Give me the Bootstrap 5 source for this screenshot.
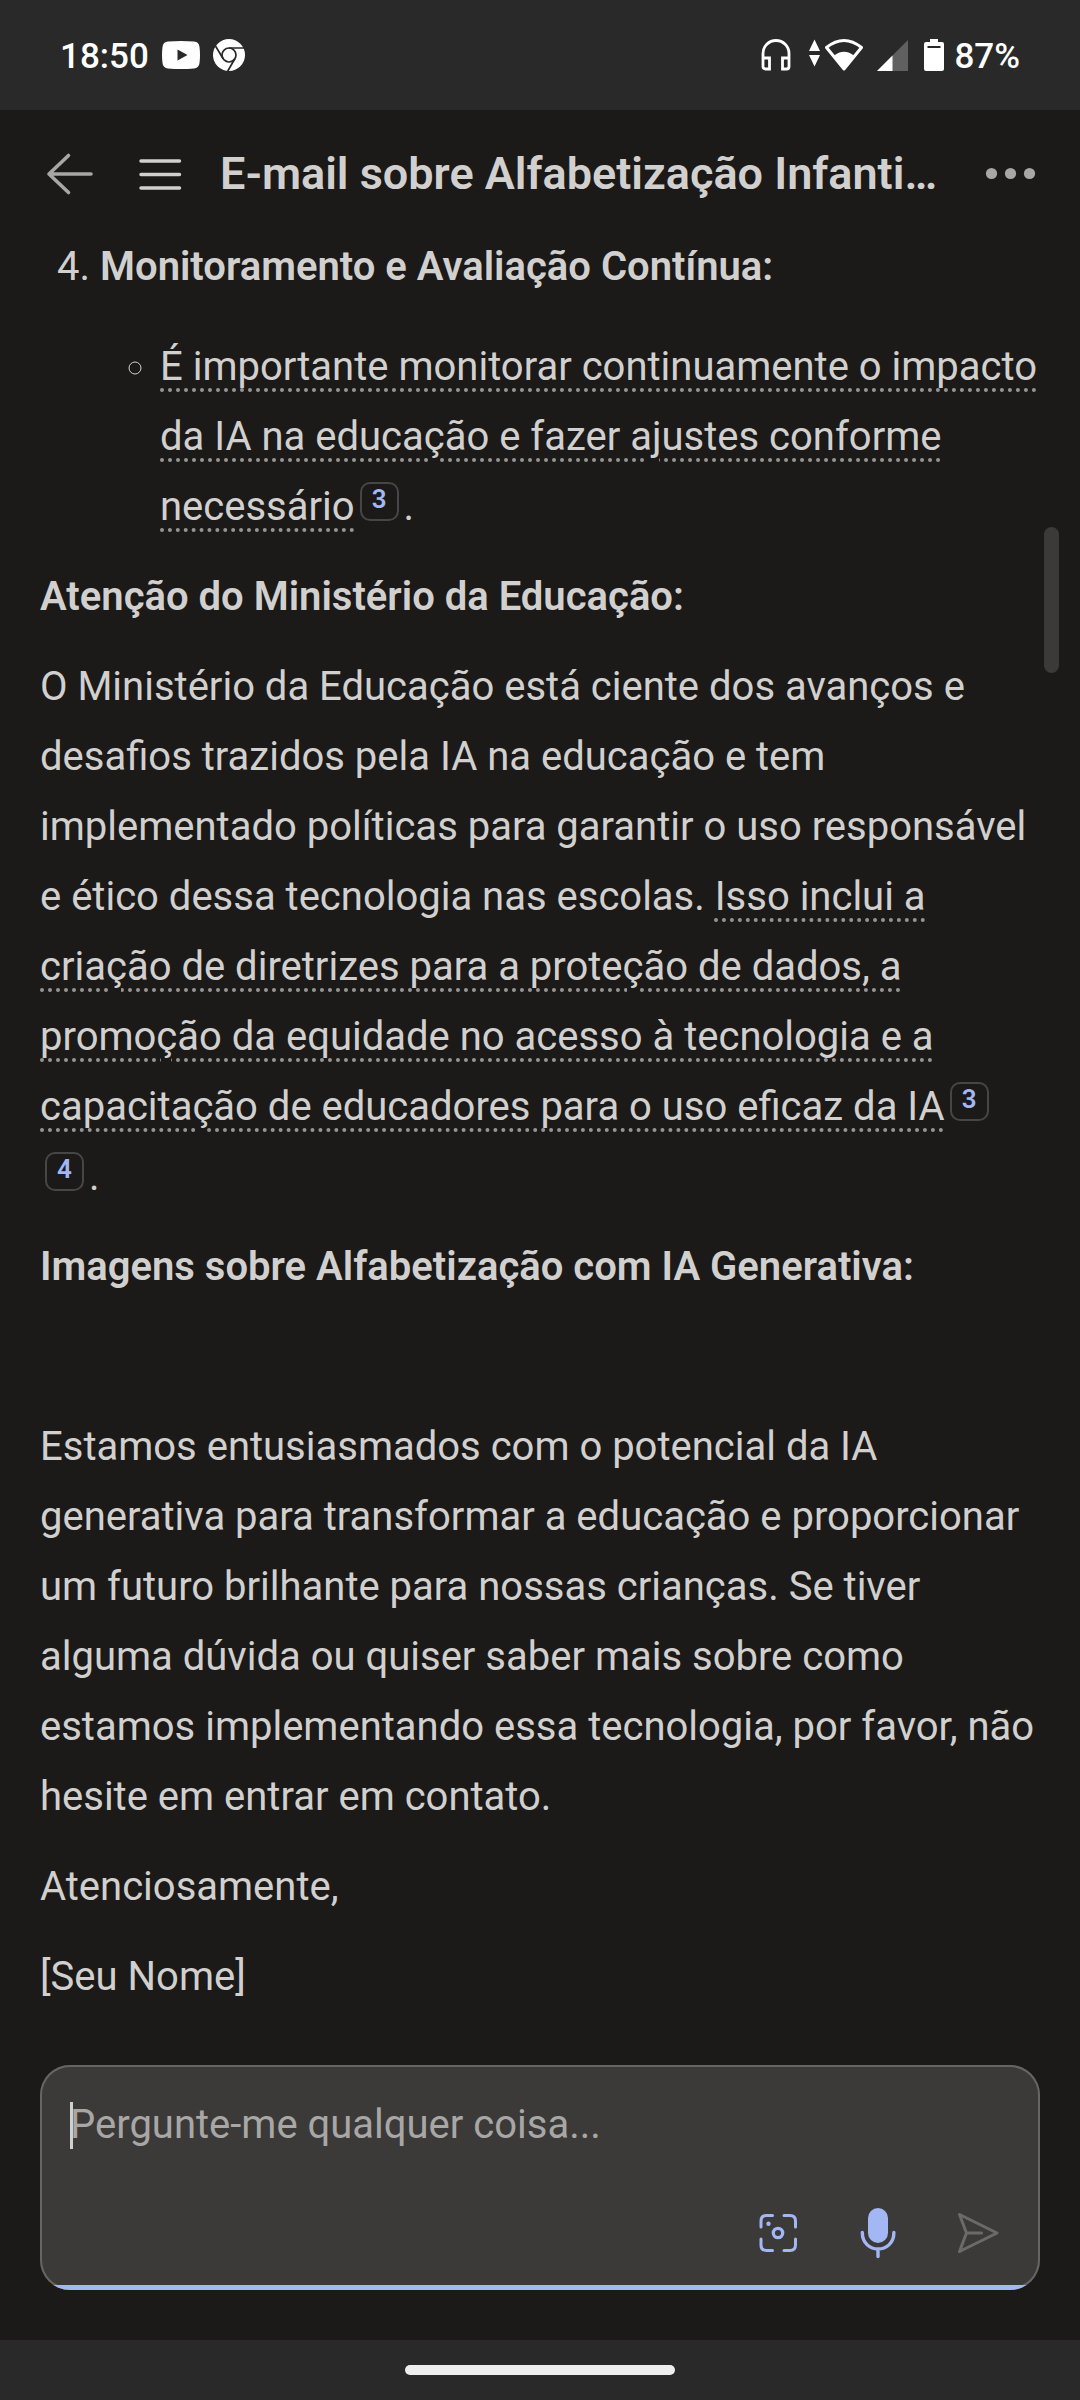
<!DOCTYPE html>
<html lang="pt-BR" data-bs-theme="dark">
<head>
<meta charset="utf-8">
<meta name="viewport" content="width=device-width, initial-scale=1">
<title>E-mail sobre Alfabetização Infantil</title>
<link href="https://cdn.jsdelivr.net/npm/bootstrap@5.3.0/dist/css/bootstrap.min.css" rel="stylesheet">
<style>
  body { width: 1080px; height: 2400px; overflow: hidden; background: #1b1a19; color: #d2d0ce; font-family: Roboto, sans-serif; font-size: 40px; line-height: 70px; }
  svg { display: block; flex: none; }
  .status-bar { height: 110px; background: #292929; color: #fff; font-size: 35px; font-weight: 500; line-height: 40px; padding: 0 60px 0 60px; }
  .status-bar span { padding-top: 3px; }
  .clock { width: 102px; }
  .title-bar { height: 122px; padding: 5px 38px 0 46px; }
  .chat-title { font-size: 45px; font-weight: 600; line-height: 60px; margin-left: 37px; width: 765px; padding-top: 29px; }
  .answer { height: 1833px; padding: 0 40px; }
  .answer p { margin: 0 0 20px; }
  .answer strong { font-weight: 600; }
  .steps { margin: 0 0 20px; padding-left: 60px; }
  .steps ul { margin: 30px 0 0; padding-left: 60px; }
  .cited { text-decoration: underline dotted #979593 4px; text-underline-offset: 8px; }
  .cite-no { display: inline-block; box-sizing: border-box; width: 39px; height: 39px; margin: 0 5px; padding-bottom: 4px; border: 2px solid #484644; border-radius: 10px; color: #a2b7f4; font-size: 26px; font-weight: 600; line-height: 31px; text-align: center; text-decoration: none; vertical-align: 12px; }
  .scroll-thumb { top: 527px; left: 1044px; width: 15px; height: 146px; border-radius: 8px; background: #3b3a38; }
  .ask-box { height: 225px; margin: 0 40px; padding: 30px 37px 30px 30px; background: #3b3a38; box-shadow: inset 0 0 0 2px #666563; border-radius: 30px; overflow: hidden; }
  .accent { left: 0; right: 0; bottom: 0; height: 5px; background: #a2b7f4; }
  .prompt { color: #a8a7a6; line-height: 60px; margin-left: -3px; }
  .caret { width: 3px; height: 47px; background: #d2d0ce; margin-top: 7px; }
  .tools { gap: 50px; }
  .gesture-bar { height: 60px; margin-top: 50px; background: #292929; }
  .gesture-pill { width: 270px; height: 10px; border-radius: 5px; background: #eee; }
</style>
</head>
<body class="position-relative">

<div class="status-bar d-flex align-items-center">
  <span class="clock">18:50</span>
  <svg width="38" height="28" viewBox="0 0 38 28"><path fill="#fff" fill-rule="evenodd" d="M6 .6Q19-.5 32 .6Q37 1 37.500 6Q38.500 14 37.500 22Q37 27 32 27.400Q19 28.500 6 27.400Q1 27 .500 22Q-.500 14 .500 6Q1 1 6 .6ZM15.500 8.500V19.500L25.500 14Z"/></svg>
  <svg class="ms-2 me-auto" width="42" height="34" viewBox="-5 0 42 34"><circle cx="16" cy="17" r="16" fill="#fff"/><g fill="none" stroke="#292929" stroke-width="1.700"><circle cx="16" cy="17" r="7"/><path d="M16 10H31.500M10 20.500L2.500 8M22 20.500L14.500 33.500"/></g></svg>
  <svg width="30" height="34" viewBox="0 0 30 34"><path fill="none" stroke="#fff" stroke-width="2.800" d="M2 21V15.500a13 13 0 0 1 26 0V21M2 20H8.500V31H4.500Q2 31 2 28.500ZM28 20H21.500V31H25.500Q28 31 28 28.500Z"/></svg>
  <svg style="margin-left:17px" width="56" height="34" viewBox="0 0 56 34"><path fill="#fff" d="M1 13L6.500 1.500L12 13ZM1 17H12L6.500 28.500Z"/><path fill="none" stroke="#fff" stroke-width="3" stroke-linejoin="round" d="M18.500 9.500Q36 -4.500 53.500 9.500L36 31Z"/><path fill="#fff" d="M25.500 18Q36 9.500 46.500 18L36 32Z"/></svg>
  <svg style="margin-left:13px" width="31" height="31" viewBox="0 0 31 31"><path fill="#606060" d="M0 31L31 0V31Z"/><path fill="#fff" d="M0 31L15.500 15.500V31Z"/></svg>
  <svg style="margin-left:16px" width="20" height="34" viewBox="0 0 20 34"><path fill="#fff" fill-rule="evenodd" d="M6 1H14V4H18Q20 4 20 6V31Q20 33 18 33H2Q0 33 0 31V6Q0 4 2 4H6ZM3.500 8V10H16.500V8Z"/></svg>
  <span style="margin-left:10px">87%</span>
</div>

<header class="title-bar d-flex">
  <svg class="mt-4" width="48" height="70" viewBox="0 0 48 70"><path transform="translate(0 -.5)" fill="none" stroke="#a8a7a6" stroke-width="3.600" stroke-linecap="round" stroke-linejoin="round" d="M45 35.500H3M22.500 17L3 35.500L22.500 54"/></svg>
  <svg class="mt-4" style="margin-left:45px" width="44" height="70" viewBox="0 0 44 70"><path stroke="#d2d0ce" stroke-width="3.500" stroke-linecap="round" d="M2 22H40.500M2 35.500H40.500M2 49H40.500"/></svg>
  <div class="chat-title text-nowrap">E-mail sobre Alfabetização Infanti…</div>
  <svg class="mt-4" width="60" height="70" viewBox="0 0 60 70"><g fill="#a8a7a6"><circle cx="9.500" cy="34.500" r="5.600"/><circle cx="28.500" cy="34.500" r="5.600"/><circle cx="47.500" cy="34.500" r="5.600"/></g></svg>
</header>

<main class="answer">
  <ol class="steps" start="4">
    <li><strong>Monitoramento e Avaliação Contínua:</strong>
      <ul>
        <li><span class="cited">É importante monitorar continuamente o impacto da IA na educação e fazer ajustes conforme necessário</span><a class="cite-no">3</a>.</li>
      </ul>
    </li>
  </ol>
  <p><strong>Atenção do Ministério da Educação:</strong></p>
  <p>O Ministério da Educação está ciente dos avanços e desafios trazidos pela IA na educação e tem implementado políticas para garantir o uso responsável e ético dessa tecnologia nas escolas. <span class="cited">Isso inclui a criação de diretrizes para a proteção de dados, a promoção da equidade no acesso à tecnologia e a capacitação de educadores para o uso eficaz da IA</span><a class="cite-no">3</a><a class="cite-no">4</a>.</p>
  <p><strong>Imagens sobre Alfabetização com IA Generativa:</strong></p>
  <p>&nbsp;</p>
  <p>Estamos entusiasmados com o potencial da IA generativa para transformar a educação e proporcionar um futuro brilhante para nossas crianças. Se tiver alguma dúvida ou quiser saber mais sobre como estamos implementando essa tecnologia, por favor, não hesite em entrar em contato.</p>
  <p>Atenciosamente,</p>
  <p>[Seu Nome]</p>
</main>

<section class="ask-box position-relative d-flex flex-column justify-content-between">
  <div class="d-flex"><span class="caret"></span><span class="prompt">Pergunte-me qualquer coisa...</span></div>
  <div class="tools d-flex justify-content-end">
    <svg width="50" height="54" viewBox="753 2206 50 54"><g fill="none" stroke="#a2b7f4" stroke-width="3" stroke-linecap="round"><path d="M761 2227V2221Q761 2215.500 766.500 2215.500H772.500M784 2215.500H790Q795.500 2215.500 795.500 2221V2227M795.500 2239V2245Q795.500 2250.500 790 2250.500H784M772.500 2250.500H766.500Q761 2250.500 761 2245V2239"/><circle cx="778" cy="2233" r="4.700" stroke-width="3.300"/></g><circle cx="768.500" cy="2223.700" r="2.200" fill="#a2b7f4"/></svg>
    <svg width="50" height="54" viewBox="853 2206 50 54"><rect x="868" y="2208" width="20" height="35" rx="10" fill="#a2b7f4"/><path fill="none" stroke="#a2b7f4" stroke-width="3.400" stroke-linecap="round" d="M862.300 2232.500C862.300 2254.500 893.900 2254.500 893.900 2232.500M878 2250V2256.500"/></svg>
    <svg width="50" height="54" viewBox="953 2206 50 54"><path fill="none" stroke="#6b6a69" stroke-width="3" stroke-linecap="round" stroke-linejoin="round" d="M959.500 2214.500L997 2233L959.500 2251.500L966.500 2233ZM966.500 2233H981.500"/></svg>
  </div>
  <div class="accent position-absolute"></div>
</section>

<footer class="gesture-bar d-flex align-items-center justify-content-center"><div class="gesture-pill"></div></footer>

<div class="scroll-thumb position-absolute"></div>

<script src="https://cdn.jsdelivr.net/npm/bootstrap@5.3.0/dist/js/bootstrap.bundle.min.js"></script>
</body>
</html>
